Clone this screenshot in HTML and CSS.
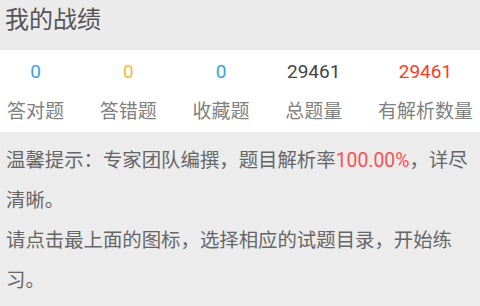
FILE: index.html
```html
<!DOCTYPE html>
<html lang="zh-CN">
<head>
<meta charset="utf-8">
<link rel="stylesheet" href="styles.css">
</head>
<body>
<header class="title">我的战绩</header>
<section class="stats">
  <div class="stat"><span class="num blue">0</span><span class="label">答对题</span></div>
  <div class="stat"><span class="num orange">0</span><span class="label">答错题</span></div>
  <div class="stat"><span class="num blue">0</span><span class="label">收藏题</span></div>
  <div class="stat"><span class="num dark">29461</span><span class="label">总题量</span></div>
  <div class="stat"><span class="num red">29461</span><span class="label">有解析数量</span></div>
</section>
<section class="tips">
  <p>温馨提示：专家团队编撰，题目解析率<span class="rate">100.00%</span>，详尽清晰。</p>
  <p>请点击最上面的图标，选择相应的试题目录，开始练习。</p>
</section>
</body>
</html>
```
FILE: styles.css
```css
html, body {
  margin: 0;
  padding: 0;
}
body {
  width: 480px;
  height: 306px;
  overflow: hidden;
  background: #ececec;
  font-family: Roboto, "Noto Sans CJK SC", sans-serif;
}
.title {
  height: 50px;
  line-height: 41px;
  padding-left: 5px;
  font-size: 24px;
  color: #555555;
  background: #ebebeb;
}
.stats {
  background: #ffffff;
  height: 82px;
  box-sizing: border-box;
  padding: 2px 7px 0;
  display: flex;
  justify-content: space-between;
}
.stat {
  display: flex;
  flex-direction: column;
  align-items: center;
}
.num {
  font-size: 19px;
  line-height: 40px;
}
.label {
  font-size: 19px;
  line-height: 40px;
  color: #808080;
}
.blue { color: #3d9fe8; }
.orange { color: #fbb641; }
.dark { color: #444444; }
.red { color: #ff3b1e; }
.tips {
  padding: 9px 6px 0;
  font-size: 19.4px;
  line-height: 40px;
  color: #666666;
}
.tips p {
  margin: 0;
}
.rate {
  color: #ff4f55;
}
```
